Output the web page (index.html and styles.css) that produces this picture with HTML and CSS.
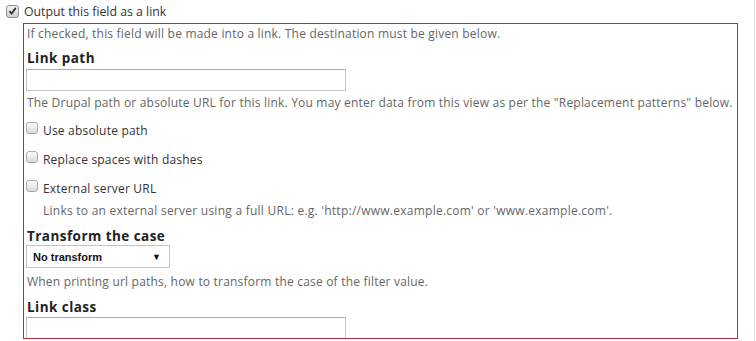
FILE: index.html
```html
<!DOCTYPE html>
<html>
<head>
<meta charset="utf-8">
<link rel="stylesheet" href="styles.css">
</head>
<body>
<div class="page">
  <div class="main">
    <label class="top-row">
      <span class="cb checked"><svg viewBox="0 0 12 12" width="12" height="12"><path d="M2.6 6.2 L5 8.8 L9.6 2.6" fill="none" stroke="#333" stroke-width="1.9"/></svg></span>
      <span class="top-label">Output this field as a link</span>
    </label>
    <div class="box">
      <div class="desc d1">If checked, this field will be made into a link. The destination must be given below.</div>
      <div class="label l1">Link path</div>
      <div class="text-input i1"></div>
      <div class="desc d2">The Drupal path or absolute URL for this link. You may enter data from this view as per the "Replacement patterns" below.</div>
      <label class="cb-row r1"><span class="cb"></span><span>Use absolute path</span></label>
      <label class="cb-row r2"><span class="cb"></span><span>Replace spaces with dashes</span></label>
      <label class="cb-row r3"><span class="cb"></span><span>External server URL</span></label>
      <div class="desc d3 indent">Links to an external server using a full URL: e.g. 'http://www.example.com' or 'www.example.com'.</div>
      <div class="label l2">Transform the case</div>
      <div class="select"><span>No transform</span><span class="arrow">&#9660;</span></div>
      <div class="desc d4">When printing url paths, how to transform the case of the filter value.</div>
      <div class="label l3">Link class</div>
      <div class="text-input i2"></div>
    </div>
  </div>
  <div class="rail"></div>
</div>
</body>
</html>
```
FILE: styles.css
```css
* { box-sizing: border-box; }
html, body { margin: 0; padding: 0; background: #fff; }
body {
  font-family: "Open Sans", "Liberation Sans", sans-serif;
  font-size: 12px;
  color: #333;
  width: 756px;
  height: 341px;
  overflow: hidden;
}
.page { display: flex; height: 341px; }
.main { width: 754px; }
.rail { width: 1px; background: #e2e2e2; height: 341px; }

.top-row {
  display: flex;
  align-items: center;
  height: 22px;
  padding-left: 6px;
  gap: 5px;
}
.top-label { font-size: 12.3px; color: #333; }

.cb {
  width: 12px;
  height: 12px;
  border: 1px solid #a9a9a9;
  border-radius: 3px;
  background: linear-gradient(#fdfdfd, #d8d8d8);
  display: inline-flex;
  align-items: center;
  justify-content: center;
  flex: none;
}
.cb.checked { width: 13px; height: 13px; background: linear-gradient(#f4f4f4, #cfcfcf); border-color: #8f8f8f; }

.box {
  margin-left: 23px;
  margin-top: 1px;
  width: 715px;
  height: 316px;
  border: 1px solid #a8343f;
  padding: 2px 0 0 2px;
  overflow: hidden;
}
.desc {
  line-height: 16px;
  color: #666;
  font-size: 12px;
  letter-spacing: 0.2px;
  white-space: nowrap;
  padding-left: 1px;
}
.label {
  line-height: 16px;
  font-size: 13.5px;
  letter-spacing: 0.45px;
  font-weight: bold;
  color: #222;
  padding-left: 1px;
}
.text-input {
  width: 320px;
  height: 22px;
  border: 1px solid #c4c4c4;
  border-top-color: #aaa;
  background: #fff;
}
.cb-row {
  display: flex;
  align-items: center;
  height: 20px;
  gap: 5px;
  color: #333;
  font-size: 12px;
  letter-spacing: 0.2px;
}
.cb-row .cb { margin-bottom: 4px; }
.indent { padding-left: 17px; letter-spacing: 0.25px; }

.select {
  width: 144px;
  height: 23px;
  border: 1px solid #c6c6c6;
  display: flex;
  align-items: center;
  justify-content: space-between;
  padding: 0 8px 0 6px;
  font-family: "Liberation Sans", Arial, sans-serif;
  font-weight: bold;
  font-size: 11px;
  color: #111;
}
.arrow { font-size: 9px; }

.d1 { margin-top: 0; }
.l1 { margin-top: 8px; }
.i1 { margin-top: 3px; }
.d2 { margin-top: 4px; }
.r1 { margin-top: 9px; }
.r2 { margin-top: 9px; }
.r3 { margin-top: 9px; }
.d3 { margin-top: 5px; }
.l2 { margin-top: 9px; }
.select { margin-top: 1px; }
.d4 { margin-top: 6px; }
.l3 { margin-top: 9px; }
.i2 { margin-top: 2px; }
```
